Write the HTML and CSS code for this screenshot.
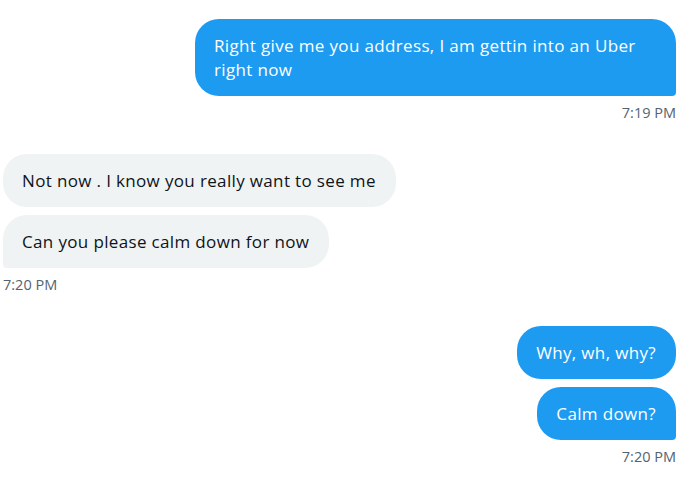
FILE: index.html
```html
<!DOCTYPE html>
<html>
<head>
<meta charset="utf-8">
<link rel="stylesheet" href="styles.css">
</head>
<body>
<div class="chat">
  <div class="group sent">
    <div class="bubble only">Right give me you address, I am gettin into an Uber right now</div>
    <div class="time">7:19 PM</div>
  </div>
  <div class="group recv">
    <div class="bubble first">Not now . I know you really want to see me</div>
    <div class="bubble last">Can you please calm down for now</div>
    <div class="time">7:20 PM</div>
  </div>
  <div class="group sent">
    <div class="bubble first">Why, wh, why?</div>
    <div class="bubble last">Calm down?</div>
    <div class="time">7:20 PM</div>
  </div>
</div>
</body>
</html>
```

FILE: styles.css
```css
html, body {
  margin: 0;
  padding: 0;
  background: #ffffff;
}
body {
  font-family: "Open Sans", "Liberation Sans", sans-serif;
  width: 693px;
  height: 481px;
  overflow: hidden;
}
.chat {
  display: flex;
  flex-direction: column;
  gap: 31px;
  padding: 19px 17px 0 3px;
}
.group {
  display: flex;
  flex-direction: column;
  gap: 8px;
}
.sent { align-items: flex-end; }
.recv { align-items: flex-start; }
.bubble {
  font-size: 17px;
  letter-spacing: 0.35px;
  line-height: 24px;
  padding: 15px 20px 14px 19px;
  border-radius: 24px;
  max-width: 442px;
}
.sent .bubble {
  background: #1d9bf0;
  color: #ffffff;
}
.recv .bubble {
  background: #eff3f4;
  color: #0f1419;
}
.sent .bubble.only { border-bottom-right-radius: 4px; }
.sent .bubble.last { border-bottom-right-radius: 4px; }
.recv .bubble.last { border-bottom-left-radius: 4px; }
.time {
  font-size: 14.5px;
  line-height: 20px;
  color: #536471;
  margin-top: -1px;
}
```
